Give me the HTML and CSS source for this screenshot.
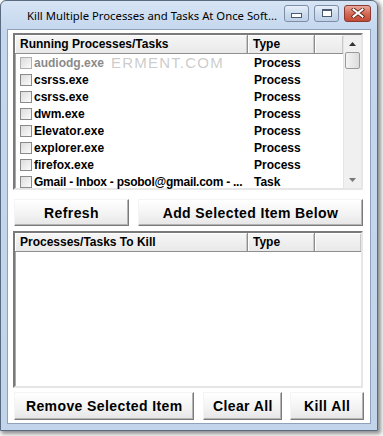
FILE: index.html
```html
<!DOCTYPE html>
<html>
<head>
<meta charset="utf-8">
<link rel="stylesheet" href="styles.css">
</head>
<body>
<div class="window">
  <div class="titlebar">
    <div class="title">Kill Multiple Processes and Tasks At Once Soft...</div>
    <div class="tbtns">
      <div class="tbtn min"><span class="min-glyph"></span></div>
      <div class="tbtn max"><span class="max-glyph"></span></div>
      <div class="tbtn close">
        <svg width="14" height="10" viewBox="0 0 14 10"><path d="M2.5 1.5 L11.5 8.5 M11.5 1.5 L2.5 8.5" stroke="#5a2018" stroke-width="3.6" stroke-linecap="square"/><path d="M2.5 1.5 L11.5 8.5 M11.5 1.5 L2.5 8.5" stroke="#fff" stroke-width="2" stroke-linecap="square"/></svg>
      </div>
    </div>
  </div>
  <div class="client">
    <div class="list">
      <div class="header">
        <div class="hcell c1">Running Processes/Tasks</div>
        <div class="hcell c2">Type</div>
        <div class="hcell c3"></div>
      </div>
      <div class="rows">
        <div class="row dim"><span class="cb"></span><span class="name">audiodg.exe</span><span class="type">Process</span></div>
        <div class="row"><span class="cb"></span><span class="name">csrss.exe</span><span class="type">Process</span></div>
        <div class="row"><span class="cb"></span><span class="name">csrss.exe</span><span class="type">Process</span></div>
        <div class="row"><span class="cb"></span><span class="name">dwm.exe</span><span class="type">Process</span></div>
        <div class="row"><span class="cb"></span><span class="name">Elevator.exe</span><span class="type">Process</span></div>
        <div class="row"><span class="cb"></span><span class="name">explorer.exe</span><span class="type">Process</span></div>
        <div class="row"><span class="cb"></span><span class="name">firefox.exe</span><span class="type">Process</span></div>
        <div class="row"><span class="cb"></span><span class="name long">Gmail - Inbox - psobol@gmail.com - ...</span><span class="type">Task</span></div>
      </div>
      <div class="scrollbar">
        <div class="arrow up"><svg width="7" height="4" viewBox="0 0 7 4"><path d="M0 4 L3.5 0 L7 4 Z" fill="#333"/></svg></div>
        <div class="thumb"></div>
        <div class="track"></div>
        <div class="arrow down"><svg width="7" height="4" viewBox="0 0 7 4"><path d="M0 0 L3.5 4 L7 0 Z" fill="#777"/></svg></div>
      </div>
      <div class="watermark">ERMENT.COM</div>
    </div>
    <div class="btnrow top">
      <div class="btn refresh">Refresh</div>
      <div class="btn add">Add Selected Item Below</div>
    </div>
    <div class="list list2">
      <div class="header">
        <div class="hcell c1">Processes/Tasks To Kill</div>
        <div class="hcell c2">Type</div>
        <div class="hcell c3 wide"></div>
      </div>
    </div>
    <div class="btnrow bottom">
      <div class="btn remove">Remove Selected Item</div>
      <div class="btn clear">Clear All</div>
      <div class="btn kill">Kill All</div>
    </div>
  </div>
</div>
</body>
</html>
```

FILE: styles.css
```css
html, body {
  margin: 0;
  padding: 0;
  background: #ffffff;
}
body {
  width: 383px;
  height: 436px;
  overflow: hidden;
}
.window {
  width: 376px;
  height: 429px;
  border: 1px solid #5a6a80;
  border-radius: 6px 6px 0 0;
  background: linear-gradient(#d6e4f4, #c4d7ee 30px, #c1d4ea);
  box-shadow: 2px 2px 4px 1px rgba(0,0,0,0.45);
  display: flex;
  flex-direction: column;
  position: relative;
}
.titlebar {
  height: 28px;
  display: flex;
  align-items: center;
  padding-left: 26px;
  padding-right: 6px;
}
.title {
  font-family: "Noto Sans", "Open Sans", sans-serif;
  font-size: 11.3px;
  color: #000;
  flex: 1;
  white-space: nowrap;
  overflow: hidden;
  margin-top: 1px;
}
.tbtns {
  display: flex;
  gap: 5px;
  align-items: center;
  margin-top: -4px;
  flex: none;
}
.tbtn {
  height: 17px;
  border: 1px solid #7d8ea6;
  border-radius: 3px;
  display: flex;
  align-items: center;
  justify-content: center;
  box-sizing: border-box;
}
.min, .max {
  width: 25px;
  background: linear-gradient(#e8f0fa, #cddcee 50%, #bfd0e6);
}
.close {
  width: 27px;
  background: linear-gradient(#e9a99c, #d46a55 50%, #c24a35);
  border-color: #8a3a30;
}
.min-glyph {
  width: 9px;
  height: 3px;
  border: 1px solid #4a5a70;
  background: #fff;
  margin-top: 4px;
}
.max-glyph {
  width: 8px;
  height: 5px;
  border: 1px solid #4a5a70;
  border-top-width: 2px;
  background: #fff;
}
.client {
  margin: 0 6px 6px 6px;
  flex: 1;
  border: 1px solid #8fa2ba;
  background: #ffffff;
  padding: 3px 6px 0 5px;
  box-sizing: border-box;
  display: flex;
  flex-direction: column;
}
.list {
  width: 350px;
  height: 157px;
  box-sizing: border-box;
  border: 2px solid;
  border-color: #7a7a7a #e6e6e6 #e6e6e6 #7a7a7a;
  box-shadow: inset 1px 1px 0 #a9a9a9;
  background: #fff;
  position: relative;
  flex: none;
}
.header {
  display: flex;
  height: 19px;
  background: linear-gradient(#f6f6f6, #e8e8e8);
}
.hcell {
  box-sizing: border-box;
  height: 19px;
  border-right: 1px solid #8e8e8e;
  border-bottom: 1px solid #8e8e8e;
  box-shadow: inset 1px 1px 0 #fff, inset -1px 0 0 #c8c8c8;
  font-family: "Liberation Sans", Arial, sans-serif;
  font-weight: bold;
  font-size: 12px;
  line-height: 18px;
  padding-left: 5px;
  color: #000;
}
.c1 { width: 233px; }
.c2 { width: 67px; }
.c3 { width: 29px; }
.c3.wide { width: 46px; border-right: none; }
.rows {
  position: absolute;
  left: 0;
  top: 19px;
  width: 329px;
}
.row {
  height: 17px;
  display: flex;
  align-items: center;
  font-family: "Liberation Sans", Arial, sans-serif;
  font-weight: bold;
  font-size: 12px;
  color: #000;
  padding-left: 5px;
}
.cb {
  width: 12px;
  height: 12px;
  box-sizing: border-box;
  border: 1px solid #8a8a8a;
  background: linear-gradient(135deg, #dcdcdc, #fbfbfb);
  flex: none;
}
.name {
  width: 215px;
  padding-left: 2px;
  white-space: nowrap;
  overflow: hidden;
  flex: none;
}
.name.long {
  letter-spacing: -0.25px;
}
.type {
  padding-left: 5px;
}
.row.dim .name { color: #8a8a8a; }
.row.dim .cb { border-color: #b0b0b0; }
.scrollbar {
  position: absolute;
  right: 0;
  top: 0;
  width: 17px;
  bottom: 0;
  background: #f0f0f0;
  display: flex;
  flex-direction: column;
  border-left: 1px solid #e4e4e4;
}
.arrow {
  height: 17px;
  display: flex;
  align-items: center;
  justify-content: center;
  flex: none;
}
.thumb {
  height: 17px;
  margin: 0 1px;
  box-sizing: border-box;
  border: 1px solid #9a9a9a;
  border-radius: 2px;
  background: linear-gradient(90deg, #f4f4f4, #dcdcdc);
  flex: none;
}
.track { flex: 1; }
.watermark {
  position: absolute;
  left: 96px;
  top: 19px;
  font-family: "Liberation Sans", Arial, sans-serif;
  font-size: 15px;
  letter-spacing: 1.2px;
  color: rgba(160,160,160,0.55);
  pointer-events: none;
}
.btnrow {
  display: flex;
  gap: 9px;
  padding-left: 1px;
  flex: none;
}
.btnrow.top {
  margin-top: 9px;
  margin-bottom: 5px;
}
.btnrow.bottom {
  margin-top: 4px;
  gap: 8px;
}
.btn {
  height: 27px;
  box-sizing: border-box;
  border: 1px solid;
  border-color: #f4f4f4 #7a7a7a #7a7a7a #f4f4f4;
  box-shadow: inset -1px -1px 0 #b4b4b4;
  background: linear-gradient(#ffffff, #f2f2f2 60%, #e6e6e6);
  display: flex;
  align-items: center;
  justify-content: center;
  font-family: "Liberation Sans", Arial, sans-serif;
  font-weight: bold;
  font-size: 14px;
  letter-spacing: 0.4px;
  color: #000;
}
.refresh { width: 115px; }
.add { width: 225px; }
.remove { width: 181px; }
.clear { width: 79px; margin-left: 1px; }
.kill { width: 74px; }
.btnrow.bottom .btn { height: 28px; }
```
